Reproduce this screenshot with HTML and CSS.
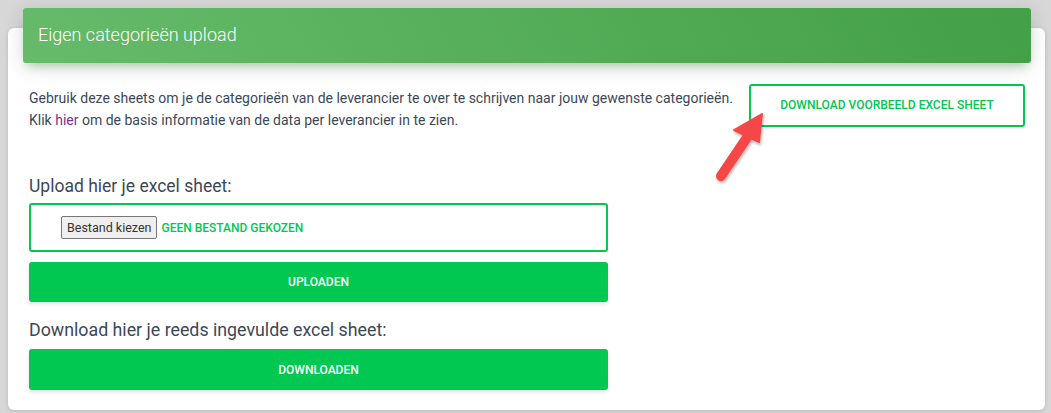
FILE: index.html
```html
<!DOCTYPE html>
<html lang="nl">
<head>
<meta charset="utf-8">
<title>Eigen categorieën upload</title>
<link rel="stylesheet" href="styles.css">
</head>
<body>
<div class="page">
  <div class="card">
    <div class="card-header">
      <h4 class="card-title">Eigen categorieën upload</h4>
    </div>
    <div class="card-body">
      <div class="intro">
        <div class="intro-text">
          <p>Gebruik deze sheets om je de categorieën van de leverancier te over te schrijven naar jouw gewenste categorieën.</p>
          <p>Klik <a href="#" class="link">hier</a> om de basis informatie van de data per leverancier in te zien.</p>
        </div>
        <a href="#" class="btn-outline">DOWNLOAD VOORBEELD EXCEL SHEET</a>
      </div>
      <div class="form">
        <label class="form-label">Upload hier je excel sheet:</label>
        <div class="file-box">
          <span class="file-btn">Bestand kiezen</span>
          <span class="file-name">GEEN BESTAND GEKOZEN</span>
        </div>
        <button class="btn-solid">UPLOADEN</button>
        <label class="form-label second">Download hier je reeds ingevulde excel sheet:</label>
        <button class="btn-solid">DOWNLOADEN</button>
      </div>
    </div>
    <svg class="arrow" width="70" height="90" viewBox="0 0 70 90" aria-hidden="true">
      <defs>
        <filter id="sh" x="-30%" y="-30%" width="160%" height="160%">
          <feDropShadow dx="1" dy="2" stdDeviation="1.5" flood-color="#000" flood-opacity="0.3"/>
        </filter>
      </defs>
      <g filter="url(#sh)" fill="#f44747" stroke="#f44747" stroke-linejoin="round">
        <line x1="16" y1="71" x2="43" y2="31" stroke-width="10" stroke-linecap="round"/>
        <polygon points="57,9 29,25 54,37" stroke-width="2"/>
      </g>
    </svg>
  </div>
</div>
</body>
</html>
```
FILE: styles.css
```css
* { box-sizing: border-box; }
html, body { margin: 0; padding: 0; }
body {
  background: #d7d7d7;
  font-family: Roboto, "Liberation Sans", Arial, sans-serif;
  color: #3c4858;
  width: 1051px;
  height: 413px;
  overflow: hidden;
}
.page {
  padding: 28px 6px 0 8px;
}
.card {
  position: relative;
  background: #fff;
  border-radius: 6px;
  box-shadow: 0 1px 4px 0 rgba(0,0,0,0.14);
  height: 382px;
}
.card-header {
  margin: 0 14px 0 15px;
  position: relative;
  top: -20px;
  height: 55px;
  border-radius: 3px;
  background: linear-gradient(60deg, #66bb6a, #43a047);
  box-shadow: 0 4px 20px 0 rgba(0,0,0,0.14), 0 7px 10px -5px rgba(76,175,80,0.4);
  padding: 0 15px;
  display: flex;
  align-items: center;
}
.card-title {
  margin: 0;
  color: #fff;
  font-weight: 300;
  font-size: 18px;
  line-height: 1;
  padding-bottom: 2px;
}
.card-body {
  margin-top: -20px;
  padding: 21px 20px 0 21px;
}
.intro {
  display: flex;
  justify-content: space-between;
  align-items: flex-start;
}
.intro-text {
  padding-top: 3px;
}
.intro-text p {
  margin: 0;
  font-size: 14px;
  line-height: 22px;
  color: #3c4858;
}
.link {
  color: #7b2f8e;
  text-decoration: none;
}
.btn-outline {
  display: flex;
  align-items: center;
  justify-content: center;
  width: 276px;
  height: 43px;
  border: 2px solid #00c851;
  border-radius: 3px;
  color: #00c851;
  font-size: 12px;
  font-weight: 500;
  text-decoration: none;
  padding-bottom: 2px;
}
.form {
  width: 579px;
  margin-top: 44px;
}
.form-label {
  display: block;
  font-size: 17.5px;
  line-height: 22px;
  color: #3c4858;
  margin-bottom: 6px;
}
.form-label.second {
  font-size: 17.8px;
  margin-top: 17px;
  margin-bottom: 8px;
}
.file-box {
  height: 49px;
  border: 2px solid #00c851;
  border-radius: 3px;
  display: flex;
  align-items: center;
  padding-left: 30px;
}
.file-btn {
  display: inline-block;
  height: 23px;
  line-height: 21px;
  padding: 0 5px;
  border: 1px solid #767676;
  border-radius: 2px;
  background: #efefef;
  color: #333;
  font-size: 12.5px;
}
.file-name {
  margin-left: 4px;
  color: #00c851;
  font-size: 12px;
  font-weight: 500;
}
.btn-solid {
  display: block;
  width: 100%;
  height: 40px;
  margin-top: 10px;
  border: none;
  border-radius: 3px;
  background: #00c851;
  color: #fff;
  font-family: Roboto, "Liberation Sans", Arial, sans-serif;
  font-size: 12px;
  font-weight: 500;
  box-shadow: 0 2px 4px rgba(0,0,0,0.12);
  cursor: pointer;
}
.form-label.second + .btn-solid {
  margin-top: 0;
  height: 41px;
}
.arrow {
  position: absolute;
  left: 697px;
  top: 77px;
}
```
